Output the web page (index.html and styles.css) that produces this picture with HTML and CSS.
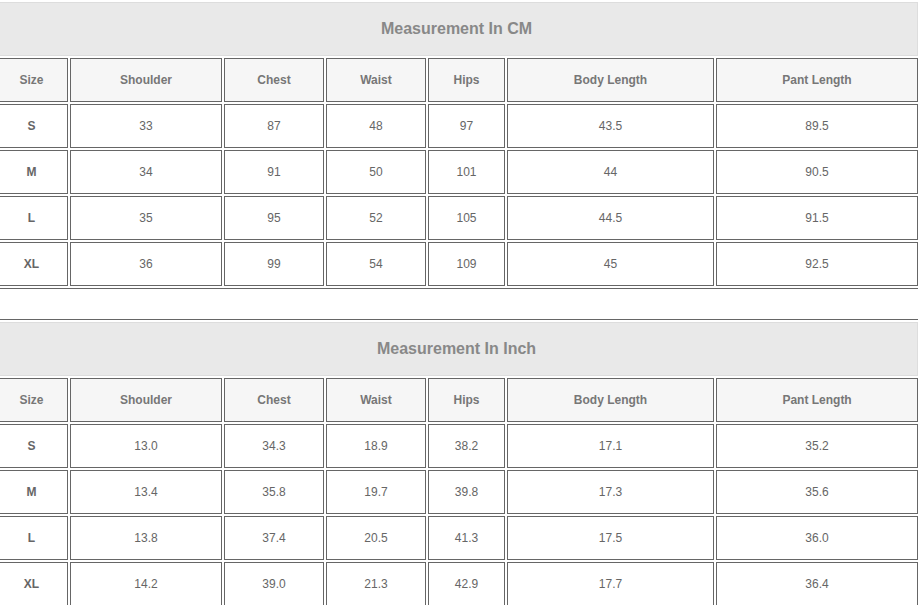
FILE: index.html
```html
<!DOCTYPE html>
<html>
<head>
<meta charset="utf-8">
<link rel="stylesheet" href="styles.css">
</head>
<body>
<div class="page">
  <table class="size-table">
    <colgroup>
      <col class="c-size"><col class="c-shoulder"><col class="c-chest"><col class="c-waist"><col class="c-hips"><col class="c-body"><col class="c-pant">
    </colgroup>
    <tr class="title-row"><td colspan="7">Measurement In CM</td></tr>
    <tr class="head-row"><th>Size</th><th>Shoulder</th><th>Chest</th><th>Waist</th><th>Hips</th><th>Body Length</th><th>Pant Length</th></tr>
    <tr><td class="sz">S</td><td>33</td><td>87</td><td>48</td><td>97</td><td>43.5</td><td>89.5</td></tr>
    <tr><td class="sz">M</td><td>34</td><td>91</td><td>50</td><td>101</td><td>44</td><td>90.5</td></tr>
    <tr><td class="sz">L</td><td>35</td><td>95</td><td>52</td><td>105</td><td>44.5</td><td>91.5</td></tr>
    <tr><td class="sz">XL</td><td>36</td><td>99</td><td>54</td><td>109</td><td>45</td><td>92.5</td></tr>
  </table>

  <table class="size-table second">
    <colgroup>
      <col class="c-size"><col class="c-shoulder"><col class="c-chest"><col class="c-waist"><col class="c-hips"><col class="c-body"><col class="c-pant">
    </colgroup>
    <tr class="title-row"><td colspan="7">Measurement In Inch</td></tr>
    <tr class="head-row"><th>Size</th><th>Shoulder</th><th>Chest</th><th>Waist</th><th>Hips</th><th>Body Length</th><th>Pant Length</th></tr>
    <tr><td class="sz">S</td><td>13.0</td><td>34.3</td><td>18.9</td><td>38.2</td><td>17.1</td><td>35.2</td></tr>
    <tr><td class="sz">M</td><td>13.4</td><td>35.8</td><td>19.7</td><td>39.8</td><td>17.3</td><td>35.6</td></tr>
    <tr><td class="sz">L</td><td>13.8</td><td>37.4</td><td>20.5</td><td>41.3</td><td>17.5</td><td>36.0</td></tr>
    <tr><td class="sz">XL</td><td>14.2</td><td>39.0</td><td>21.3</td><td>42.9</td><td>17.7</td><td>36.4</td></tr>
  </table>
</div>
</body>
</html>
```

FILE: styles.css
```css
html, body {
  margin: 0;
  padding: 0;
  background: #ffffff;
  overflow: hidden;
}

.page {
  margin-left: -8px;
  margin-top: -1px;
  font-family: "Liberation Sans", Arial, sans-serif;
}

.size-table {
  width: 929px;
  table-layout: fixed;
  border-collapse: separate;
  border-spacing: 2px;
  border: 1px solid #666666;
}

.size-table.second {
  margin-top: 30px;
}

.c-size { width: 73px; }
.c-shoulder { width: 152px; }
.c-chest { width: 100px; }
.c-waist { width: 100px; }
.c-hips { width: 77px; }
.c-body { width: 207px; }
.c-pant { width: 202px; }

.size-table td,
.size-table th {
  box-sizing: border-box;
  height: 44px;
  padding: 0;
  border: 1px solid #666666;
  text-align: center;
  vertical-align: middle;
  font-size: 12px;
  color: #666666;
  background: #ffffff;
}

.size-table th {
  font-weight: bold;
  color: #777777;
  background: #f6f6f6;
}

.size-table td.sz {
  font-weight: bold;
  color: #666666;
}

.title-row td {
  height: 54px;
  background: #e9e9e9;
  border: 1px solid #dddddd;
  font-size: 16px;
  font-weight: bold;
  color: #888888;
}
```
